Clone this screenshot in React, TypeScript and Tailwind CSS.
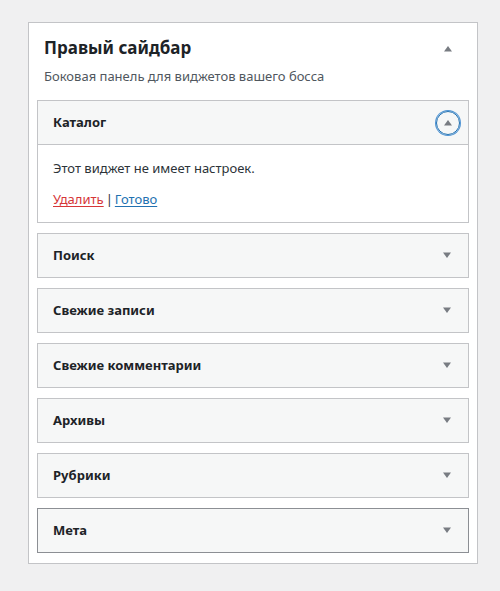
import React from "react";

const font = { fontFamily: '"Noto Sans", "Open Sans", sans-serif' };

function Arrow({ up = false }: { up?: boolean }) {
  return (
    <svg width="10" height="7" viewBox="0 0 10 7" className="block">
      {up ? (
        <polygon points="1,6.5 9,6.5 5,1" fill="#787c82" />
      ) : (
        <polygon points="1,0.5 9,0.5 5,6" fill="#787c82" />
      )}
    </svg>
  );
}

function Widget({ title, dark = false }: { title: string; dark?: boolean }) {
  return (
    <div
      className={`h-[45px] border bg-[#f6f7f7] flex items-center justify-between pl-[15px] pr-[16px] ${
        dark ? "border-[#8c8f94]" : "border-[#c3c4c7]"
      }`}
    >
      <span className="text-[13px] font-bold text-[#1d2327]">{title}</span>
      <span className="w-[10px] flex justify-center">
        <Arrow />
      </span>
    </div>
  );
}

export default function App() {
  return (
    <div className="min-h-[591px] w-[500px] bg-[#f0f0f1] pt-[22px] pl-[28px]" style={font}>
      <div className="w-[450px] h-[542px] border border-[#c3c4c7] bg-white px-[8px] pt-[13px]">
        <div className="flex items-center justify-between pl-[7px] pr-[16px] h-[24px]">
          <h2 className="text-[17px] leading-[24px] font-bold text-[#1d2327]">Правый сайдбар</h2>
          <Arrow up />
        </div>
        <p className="pl-[7px] mt-[6px] text-[13px] leading-[20px] text-[#50575e]">
          Боковая панель для виджетов вашего босса
        </p>
        <div className="mt-[14px] flex flex-col gap-[10px]">
          <div className="border border-[#c3c4c7]">
            <div className="h-[44px] bg-[#f6f7f7] border-b border-[#c3c4c7] flex items-center justify-between pl-[15px] pr-[8px]">
              <span className="text-[13px] font-bold text-[#1d2327]">Каталог</span>
              <span className="w-[24px] h-[24px] rounded-full border border-[#2271b1] shadow-[0_0_0_1px_#4f94d4] flex items-center justify-center">
                <Arrow up />
              </span>
            </div>
            <div className="px-[15px] pt-[13px] pb-[13px] text-[13px] leading-[20px] text-[#2c3338]">
              <p>Этот виджет не имеет настроек.</p>
              <p className="mt-[11px]">
                <a className="text-[#d63638] underline underline-offset-2">Удалить</a>
                <span className="text-[#2c3338] mx-[2px]">|</span>
                <a className="text-[#2271b1] underline underline-offset-2">Готово</a>
              </p>
            </div>
          </div>
          <Widget title="Поиск" />
          <Widget title="Свежие записи" />
          <Widget title="Свежие комментарии" />
          <Widget title="Архивы" />
          <Widget title="Рубрики" />
          <Widget title="Мета" dark />
        </div>
      </div>
    </div>
  );
}
